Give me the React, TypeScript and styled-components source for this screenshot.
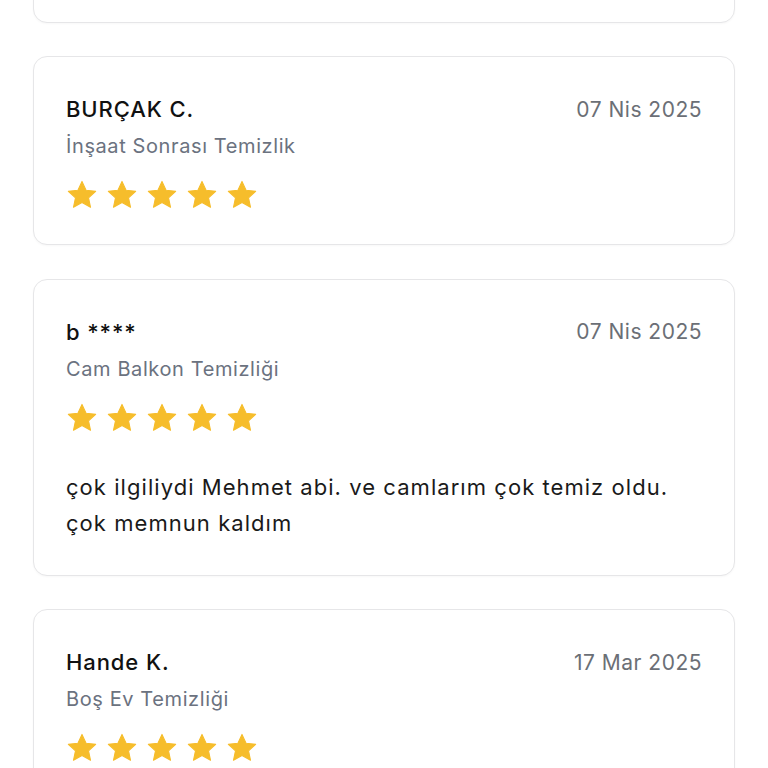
import { FC } from 'react'
import styled, { createGlobalStyle } from 'styled-components'

const GlobalStyle = createGlobalStyle`
  html, body {
    margin: 0;
    padding: 0;
    background: #ffffff;
  }
  body {
    font-family: Inter, "Noto Sans", sans-serif;
    color: #111111;
    overflow: hidden;
  }
`

const ReviewList = styled.div`
  display: flex;
  flex-direction: column;
  gap: 33.5px;
  padding: 0 33px;
  margin-top: -165.5px;
`

const Card = styled.div`
  background: #ffffff;
  border: 1.5px solid #e6e6e8;
  border-radius: 14px;
  padding: 33px 32px 33px 32px;
  box-shadow: 0 1px 2px rgba(0, 0, 0, 0.03);
`

const PlaceholderCard = styled(Card)`
  height: 188px;
  box-sizing: border-box;
`

const HeaderRow = styled.div`
  display: flex;
  justify-content: space-between;
  align-items: center;
  height: 38px;
`

const Name = styled.p`
  margin: 0;
  font-size: 22px;
  font-weight: 500;
  letter-spacing: 0.9px;
  color: #111111;
`

const DateText = styled.span`
  font-size: 21px;
  color: #6b6f76;
  letter-spacing: 0.5px;
`

const Category = styled.p`
  margin: 0;
  font-size: 20px;
  line-height: 36px;
  color: #6b7280;
  letter-spacing: 0.6px;
`

const Stars = styled.div`
  display: flex;
  gap: 8px;
  margin-top: 15px;
  height: 32px;
  align-items: center;
`

const Comment = styled.p`
  margin: 35px 0 1px 0;
  font-size: 22px;
  line-height: 36px;
  color: #1a1a1a;
  letter-spacing: 1.05px;
`

const Star: FC = () => (
  <svg width="32" height="32" viewBox="0 0 24 24">
    <path
      d="M12 1.8l3.05 6.6 7.2.8-5.35 4.9 1.5 7.1L12 17.6l-6.4 3.6 1.5-7.1L1.75 9.2l7.2-.8z"
      fill="#f6bd2b"
      stroke="#f6bd2b"
      strokeWidth="0.8"
      strokeLinejoin="round"
    />
  </svg>
)

interface IReview {
  name: string
  date: string
  category: string
  rating: number
  comment?: string
}

const reviews: IReview[] = [
  { name: 'BURÇAK C.', date: '07 Nis 2025', category: 'İnşaat Sonrası Temizlik', rating: 5 },
  {
    name: 'b ****',
    date: '07 Nis 2025',
    category: 'Cam Balkon Temizliği',
    rating: 5,
    comment: 'çok ilgiliydi Mehmet abi. ve camlarım çok temiz oldu. çok memnun kaldım',
  },
  { name: 'Hande K.', date: '17 Mar 2025', category: 'Boş Ev Temizliği', rating: 5 },
]

const ReviewCard: FC<{ review: IReview }> = ({ review }) => (
  <Card>
    <HeaderRow>
      <Name>{review.name}</Name>
      <DateText>{review.date}</DateText>
    </HeaderRow>
    <Category>{review.category}</Category>
    <Stars>
      {Array.from({ length: review.rating }).map((_, i) => (
        <Star key={i} />
      ))}
    </Stars>
    {review.comment && <Comment>{review.comment}</Comment>}
  </Card>
)

const App: FC = () => (
  <>
    <GlobalStyle />
    <ReviewList>
      <PlaceholderCard />
      {reviews.map((r, i) => (
        <ReviewCard key={i} review={r} />
      ))}
    </ReviewList>
  </>
)

export default App
